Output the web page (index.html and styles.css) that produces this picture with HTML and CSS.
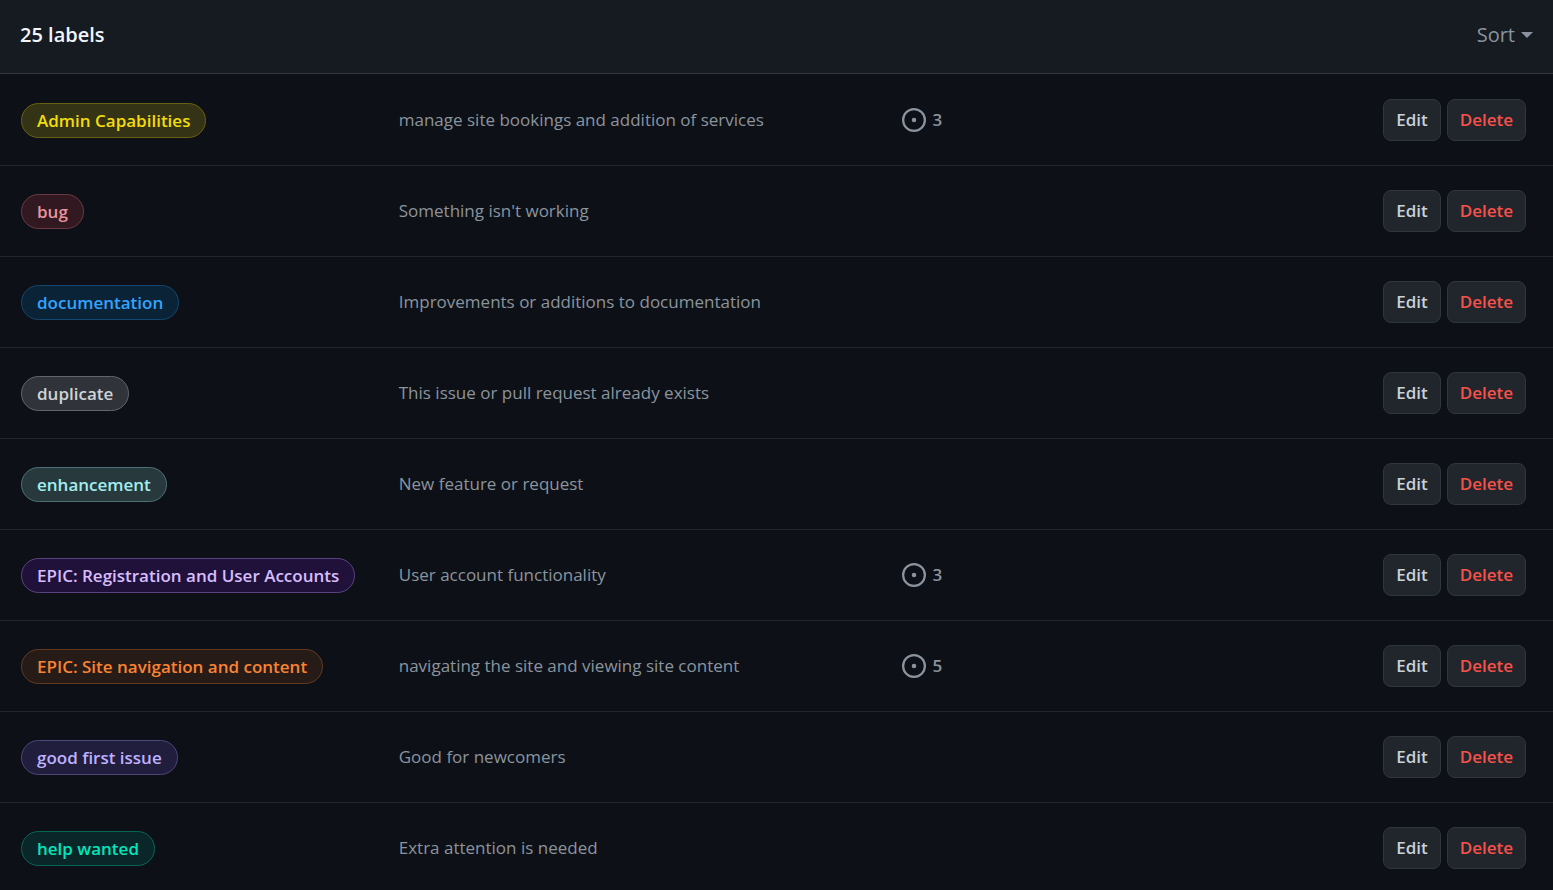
FILE: index.html
```html
<!DOCTYPE html>
<html lang="en">
<head>
<meta charset="utf-8">
<meta name="viewport" content="width=device-width, initial-scale=1">
<title>Labels</title>
<link rel="stylesheet" href="styles.css">
</head>
<body>
<svg class="sprite" aria-hidden="true">
  <symbol id="issue" viewBox="0 0 16 16">
    <path d="M8 9.5a1.5 1.5 0 1 0 0-3 1.5 1.5 0 0 0 0 3Z"/>
    <path d="M8 0a8 8 0 1 1 0 16A8 8 0 0 1 8 0ZM1.5 8a6.5 6.5 0 1 0 13 0 6.5 6.5 0 0 0-13 0Z"/>
  </symbol>
</svg>
<main class="box">
  <header class="box-header">
    <h1 class="title">25 labels</h1>
    <button class="sort" type="button">Sort<span class="caret"></span></button>
  </header>
  <ul class="list">
    <li class="row">
      <div><a class="label yellow" href="#">Admin Capabilities</a></div>
      <span class="description">manage site bookings and addition of services</span>
      <div><a class="issues" href="#"><svg class="icon" aria-hidden="true"><use href="#issue"/></svg>3</a></div>
      <div class="actions"><button class="btn" type="button">Edit</button><button class="btn danger" type="button">Delete</button></div>
    </li>
    <li class="row">
      <div><a class="label red" href="#">bug</a></div>
      <span class="description">Something isn't working</span>
      <div></div>
      <div class="actions"><button class="btn" type="button">Edit</button><button class="btn danger" type="button">Delete</button></div>
    </li>
    <li class="row">
      <div><a class="label blue" href="#">documentation</a></div>
      <span class="description">Improvements or additions to documentation</span>
      <div></div>
      <div class="actions"><button class="btn" type="button">Edit</button><button class="btn danger" type="button">Delete</button></div>
    </li>
    <li class="row">
      <div><a class="label gray" href="#">duplicate</a></div>
      <span class="description">This issue or pull request already exists</span>
      <div></div>
      <div class="actions"><button class="btn" type="button">Edit</button><button class="btn danger" type="button">Delete</button></div>
    </li>
    <li class="row">
      <div><a class="label teal" href="#">enhancement</a></div>
      <span class="description">New feature or request</span>
      <div></div>
      <div class="actions"><button class="btn" type="button">Edit</button><button class="btn danger" type="button">Delete</button></div>
    </li>
    <li class="row">
      <div><a class="label purple" href="#">EPIC: Registration and User Accounts</a></div>
      <span class="description">User account functionality</span>
      <div><a class="issues" href="#"><svg class="icon" aria-hidden="true"><use href="#issue"/></svg>3</a></div>
      <div class="actions"><button class="btn" type="button">Edit</button><button class="btn danger" type="button">Delete</button></div>
    </li>
    <li class="row">
      <div><a class="label orange" href="#">EPIC: Site navigation and content</a></div>
      <span class="description">navigating the site and viewing site content</span>
      <div><a class="issues" href="#"><svg class="icon" aria-hidden="true"><use href="#issue"/></svg>5</a></div>
      <div class="actions"><button class="btn" type="button">Edit</button><button class="btn danger" type="button">Delete</button></div>
    </li>
    <li class="row">
      <div><a class="label violet" href="#">good first issue</a></div>
      <span class="description">Good for newcomers</span>
      <div></div>
      <div class="actions"><button class="btn" type="button">Edit</button><button class="btn danger" type="button">Delete</button></div>
    </li>
    <li class="row">
      <div><a class="label green" href="#">help wanted</a></div>
      <span class="description">Extra attention is needed</span>
      <div></div>
      <div class="actions"><button class="btn" type="button">Edit</button><button class="btn danger" type="button">Delete</button></div>
    </li>
  </ul>
</main>
</body>
</html>
```

FILE: styles.css
```css
* { box-sizing: border-box; }

body {
  margin: 0;
  background: #0d1117;
  color: #c9d1d9;
  font-family: "Segoe UI", "Open Sans", "Noto Sans", sans-serif;
  font-size: 17px;
  line-height: 28px;
}

.sprite { display: none; }

.box {
  display: flex;
  flex-direction: column;
  height: 100vh;
}

.box-header {
  display: flex;
  flex: none;
  align-items: center;
  justify-content: space-between;
  padding: 21px 20px 24px;
  background: #161b22;
  border-bottom: 1px solid #30363d;
}

.title {
  margin: 0;
  color: #f0f6fc;
  font-size: 20px;
  font-weight: 600;
  line-height: 28px;
}

.sort {
  display: flex;
  align-items: center;
  gap: 6px;
  padding: 0;
  border: 0;
  background: none;
  color: #8b949e;
  font: inherit;
  font-size: 20px;
  line-height: 28px;
}

.caret {
  border: 6px solid transparent;
  border-top-color: currentColor;
  border-bottom: 0;
}

.list {
  flex: 1;
  min-height: 0;
  margin: 0;
  padding: 0;
  overflow-y: auto;
  scrollbar-width: none;
  list-style: none;
}

.row {
  display: grid;
  grid-template-columns: 3fr 4fr 2fr 3fr;
  align-items: center;
  padding: 24px 21px;
  border-top: 1px solid #21262d;
}

.row:first-child { border-top-color: transparent; }

.label {
  display: inline-block;
  padding: 0 15px;
  border: 1px solid;
  border-radius: 18px;
  font-weight: 600;
  line-height: 33px;
  text-decoration: none;
  white-space: nowrap;
  vertical-align: middle;
}

.yellow { color: #f2dc0c; background: #353315; border-color: #686113; }
.red { color: #e9949f; background: #321820; border-color: #6b3a44; }
.blue { color: #34a3ff; background: #0b2337; border-color: #13476f; }
.gray { color: #cfd3d7; background: #30333a; border-color: #62656a; }
.teal { color: #a2eeef; background: #28393e; border-color: #4c7075; }
.purple { color: #d7bdfc; background: #20113b; border-color: #5a4380; }
.orange { color: #f98332; background: #271b17; border-color: #633a1f; }
.violet { color: #beb1ff; background: #201d3d; border-color: #4c4679; }
.green { color: #00e6bf; background: #0b2628; border-color: #086655; }

.description { color: #8b949e; }

.issues {
  display: flex;
  align-items: center;
  gap: 6px;
  color: #8b949e;
  font-weight: 600;
  text-decoration: none;
}

.icon {
  width: 24px;
  height: 24px;
  fill: currentColor;
}

.actions {
  display: flex;
  justify-content: flex-end;
  gap: 6px;
  padding-right: 6px;
}

.btn {
  padding: 6px 12px;
  border: 1px solid #30363d;
  border-radius: 8px;
  background: #21262d;
  color: #c9d1d9;
  font: inherit;
  font-weight: 600;
}

.danger { color: #f85149; }
```
